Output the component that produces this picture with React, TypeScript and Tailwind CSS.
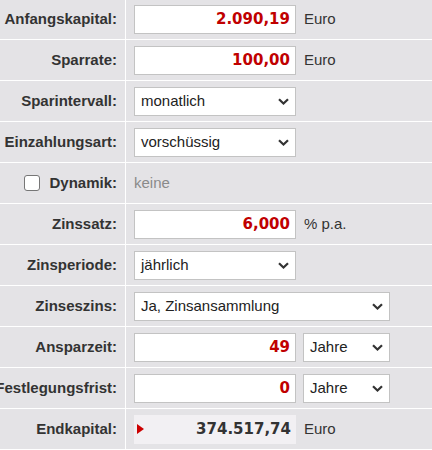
import React from "react";

const BG = "bg-[#e4e3e6]";

function Chevron() {
  return (
    <svg width="11" height="7" viewBox="0 0 11 7" className="shrink-0">
      <path d="M1 1.2 L5.5 5.5 L10 1.2" fill="none" stroke="#333" strokeWidth="2.2" />
    </svg>
  );
}

function NumInput({ value }: { value: string }) {
  return (
    <div className="w-[162px] h-[29px] border border-[#c3c3c3] bg-white flex items-center justify-end pr-[5px] font-['DejaVu_Sans',sans-serif] font-bold text-[15px] text-[#c00000]">
      {value}
    </div>
  );
}

function Select({ value, w }: { value: string; w: string }) {
  return (
    <div
      className={`${w} h-[29px] border border-[#c3c3c3] bg-white flex items-center justify-between pl-[6px] pr-[6px] font-['Liberation_Sans',Arial,sans-serif] text-[15px] text-[#222]`}
    >
      <span>{value}</span>
      <Chevron />
    </div>
  );
}

function Unit({ children }: { children: React.ReactNode }) {
  return (
    <span className="ml-[8px] font-['Liberation_Sans',Arial,sans-serif] text-[15px] text-[#333]">{children}</span>
  );
}

function Row({ label, children, first }: { label: React.ReactNode; children: React.ReactNode; first?: boolean }) {
  return (
    <div className={`flex gap-px ${first ? "h-[39px]" : "h-10"}`}>
      <div
        className={`w-[125px] shrink-0 ${BG} flex items-center justify-end pr-[8px] overflow-hidden whitespace-nowrap font-['Liberation_Sans',Arial,sans-serif] font-bold text-[15px] text-[#333]`}
      >
        {label}
      </div>
      <div className={`flex-1 ${BG} flex items-center pl-[8px]`}>{children}</div>
    </div>
  );
}

export default function App() {
  return (
    <div className="w-[432px] h-[450px] bg-white flex flex-col gap-px overflow-hidden">
      <Row label="Anfangskapital:" first>
        <NumInput value="2.090,19" />
        <Unit>Euro</Unit>
      </Row>
      <Row label="Sparrate:">
        <NumInput value="100,00" />
        <Unit>Euro</Unit>
      </Row>
      <Row label="Sparintervall:">
        <Select value="monatlich" w="w-[162px]" />
      </Row>
      <Row label="Einzahlungsart:">
        <Select value="vorschüssig" w="w-[162px]" />
      </Row>
      <Row
        label={
          <span className="flex items-center gap-[9px]">
            <span className="w-[16px] h-[16px] rounded-[3px] border border-[#767676] bg-white inline-block" />
            Dynamik:
          </span>
        }
      >
        <span className="font-['Liberation_Sans',Arial,sans-serif] text-[15px] text-[#8a8a8a]">keine</span>
      </Row>
      <Row label="Zinssatz:">
        <NumInput value="6,000" />
        <Unit>% p.a.</Unit>
      </Row>
      <Row label="Zinsperiode:">
        <Select value="jährlich" w="w-[162px]" />
      </Row>
      <Row label="Zinseszins:">
        <Select value="Ja, Zinsansammlung" w="w-[256px]" />
      </Row>
      <Row label="Ansparzeit:">
        <NumInput value="49" />
        <div className="ml-[7px]">
          <Select value="Jahre" w="w-[87px]" />
        </div>
      </Row>
      <Row label="Festlegungsfrist:">
        <NumInput value="0" />
        <div className="ml-[7px]">
          <Select value="Jahre" w="w-[87px]" />
        </div>
      </Row>
      <Row label="Endkapital:">
        <div className="w-[162px] h-[29px] bg-[#f2f0f3] flex items-center justify-between pl-[3px] pr-[5px] font-['DejaVu_Sans',sans-serif] font-bold text-[15px] text-[#333]">
          <svg width="7" height="10" viewBox="0 0 7 10">
            <path d="M0 0 L7 5 L0 10 Z" fill="#cc0000" />
          </svg>
          <span>374.517,74</span>
        </div>
        <Unit>Euro</Unit>
      </Row>
    </div>
  );
}
